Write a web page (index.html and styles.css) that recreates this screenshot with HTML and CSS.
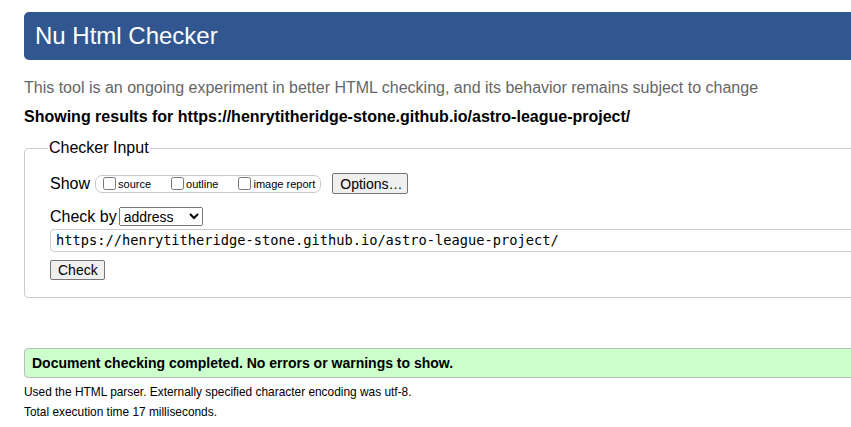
FILE: index.html
```html
<!DOCTYPE html>
<html lang="en">
<head>
<meta charset="utf-8">
<title>Nu Html Checker</title>
<link rel="stylesheet" href="styles.css">
</head>
<body>
<div class="page">
  <h1 class="banner">Nu Html Checker</h1>
  <p class="intro">This tool is an ongoing experiment in better HTML checking, and its behavior remains subject to change</p>
  <p class="showing">Showing results for https://henrytitheridge-stone.github.io/astro-league-project/</p>
  <fieldset class="input-set">
    <legend class="legend">Checker Input</legend>
    <div class="row">
      <span class="label">Show</span>
      <span class="show-group">
        <label class="opt"><input type="checkbox" class="cb"><span>source</span></label>
        <label class="opt"><input type="checkbox" class="cb"><span>outline</span></label>
        <label class="opt"><input type="checkbox" class="cb"><span>image report</span></label>
      </span>
      <button class="btn options">Options…</button>
    </div>
    <div class="row row-check">
      <span class="label">Check by</span>
      <select class="sel"><option>address</option></select>
    </div>
    <div class="url">https://henrytitheridge-stone.github.io/astro-league-project/</div>
    <div class="row">
      <button class="btn check">Check</button>
    </div>
  </fieldset>
  <div class="success">Document checking completed. No errors or warnings to show.</div>
  <p class="note">Used the HTML parser. Externally specified character encoding was utf-8.</p>
  <p class="note">Total execution time 17 milliseconds.</p>
</div>
</body>
</html>
```

FILE: styles.css
```css
html, body {
  margin: 0;
  padding: 0;
  background: #fff;
}
body {
  font-family: "Liberation Sans", Arial, sans-serif;
  color: #000;
}
.page {
  box-sizing: border-box;
  width: 100%;
  overflow: hidden;
  padding: 12px 0 0 24px;
}
.banner,
.input-set,
.url,
.success {
  margin-right: -12px;
}
.banner {
  margin-top: 0;
  margin-bottom: 0;
  height: 48px;
  line-height: 48px;
  background: #325690;
  color: #fff;
  font-weight: normal;
  font-size: 24px;
  padding-left: 11px;
  border-radius: 5px;
}
.intro {
  margin: 18px 0 0;
  font-size: 16px;
  line-height: 20px;
  color: #666;
}
.showing {
  margin: 9px 0 0;
  font-size: 16px;
  line-height: 20px;
  font-weight: bold;
}
.input-set {
  margin-top: 12px;
  margin-left: 0;
  padding: 16px 0 17px 25px;
  border: 1px solid #ccc;
  border-radius: 4px;
}
.legend {
  font-size: 16px;
  padding: 0 1px;
  margin-left: -2px;
}
.row {
  display: flex;
  align-items: center;
}
.label {
  font-size: 16px;
}
.show-group {
  display: inline-flex;
  align-items: center;
  margin-left: 5px;
  border: 1px solid #ccc;
  border-radius: 7px;
  height: 16px;
  padding: 0 5px 0 7px;
  gap: 20px;
}
.opt {
  display: inline-flex;
  align-items: center;
  font-size: 11px;
}
.cb {
  margin: 0 2px 0 0;
  width: 13px;
  height: 13px;
}
.btn {
  font-family: "Liberation Sans", Arial, sans-serif;
  font-size: 14px;
  background: #efefef;
  border: 1px solid #767676;
  border-radius: 2px;
  color: #000;
  padding: 0 7px;
}
.options {
  margin-left: 11px;
  height: 21px;
  width: 76px;
}
.row-check {
  margin-top: 13px;
}
.sel {
  margin-left: 2px;
  font-family: "Liberation Sans", Arial, sans-serif;
  font-size: 14px;
  height: 19px;
  width: 84px;
}
.url {
  margin-top: 3px;
  border: 1px solid #ccc;
  border-radius: 4px;
  height: 21px;
  line-height: 21px;
  padding-left: 5px;
  font-family: "DejaVu Sans Mono", monospace;
  font-size: 13.7px;
}
.check {
  margin-top: 8px;
  height: 20px;
  width: 55px;
}
.success {
  margin-top: 50px;
  height: 28px;
  line-height: 28px;
  background: #ccffcc;
  border: 1px solid #bbb;
  border-radius: 4px;
  padding-left: 7px;
  font-weight: bold;
  font-size: 14px;
}
.note {
  margin: 0;
  font-size: 11.9px;
  line-height: 20px;
}
.success + .note {
  margin-top: 4px;
}
```
